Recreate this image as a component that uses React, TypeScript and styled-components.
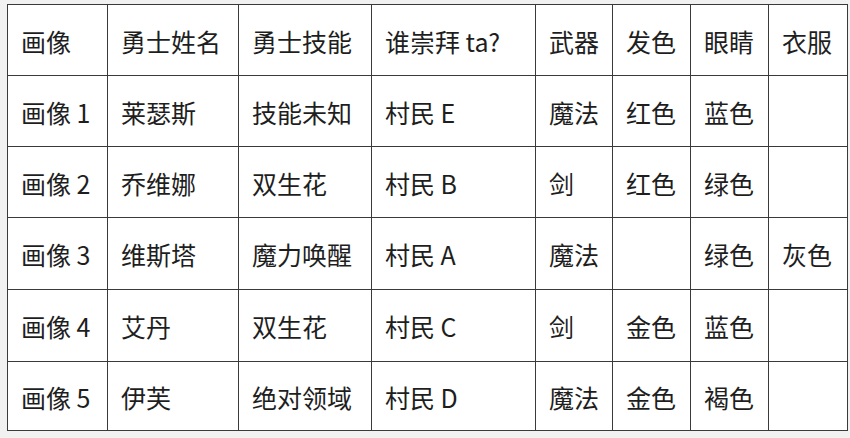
import React from "react";
import styled, { createGlobalStyle } from "styled-components";

const Global = createGlobalStyle`
  html, body { margin: 0; padding: 0; background: #f1f1f1; }
  body { width: 850px; height: 438px; overflow: hidden; }
`;

const Page = styled.div`
  padding: 4px 0 0 7px;
  font-family: "Noto Sans CJK SC", "Noto Sans", sans-serif;
  color: #1e1e1e;
`;

const Table = styled.table`
  border-collapse: collapse;
  table-layout: fixed;
  width: 840px;
  background: #ffffff;
`;

const Row = styled.tr<{ $h: number }>`
  height: ${(p) => p.$h}px;
`;

const Cell = styled.td`
  border: 1px solid #3a3a3a;
  padding: 2px 0 0 13px;
  font-size: 25px;
  line-height: 1;
  white-space: nowrap;
  vertical-align: middle;
  text-align: left;
`;

const widths = [100, 131, 133, 164, 77, 78, 78, 79];
const heights = [71, 71, 71, 72, 72, 69];

const data: string[][] = [
  ["画像", "勇士姓名", "勇士技能", "谁崇拜 ta?", "武器", "发色", "眼睛", "衣服"],
  ["画像 1", "莱瑟斯", "技能未知", "村民 E", "魔法", "红色", "蓝色", ""],
  ["画像 2", "乔维娜", "双生花", "村民 B", "剑", "红色", "绿色", ""],
  ["画像 3", "维斯塔", "魔力唤醒", "村民 A", "魔法", "", "绿色", "灰色"],
  ["画像 4", "艾丹", "双生花", "村民 C", "剑", "金色", "蓝色", ""],
  ["画像 5", "伊芙", "绝对领域", "村民 D", "魔法", "金色", "褐色", ""],
];

export default function App() {
  return (
    <>
      <Global />
      <Page>
        <Table>
          <colgroup>
            {widths.map((w, i) => (
              <col key={i} style={{ width: w }} />
            ))}
          </colgroup>
          <tbody>
            {data.map((r, i) => (
              <Row key={i} $h={heights[i]}>
                {r.map((c, j) => (
                  <Cell key={j}>{c}</Cell>
                ))}
              </Row>
            ))}
          </tbody>
        </Table>
      </Page>
    </>
  );
}
